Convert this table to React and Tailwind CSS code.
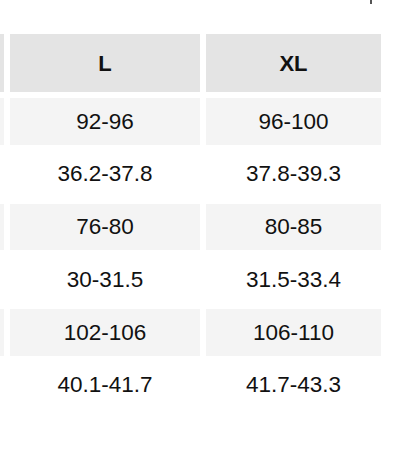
const rows = [
  ['92-96', '96-100'],
  ['36.2-37.8', '37.8-39.3'],
  ['76-80', '80-85'],
  ['30-31.5', '31.5-33.4'],
  ['102-106', '106-110'],
  ['40.1-41.7', '41.7-43.3'],
];

export default function App() {
  return (
    <div className="relative w-[404px] h-[458px] bg-white overflow-hidden font-['Liberation_Sans',Arial,sans-serif] text-[#111]">
      {/* scroll indicator tick */}
      <div className="absolute left-[370px] top-0 w-[2px] h-[4px] bg-[#555]" />

      <div className="pt-[34px]">
        <div className="-ml-[116px] flex flex-col gap-[6px]">
          <div className="grid grid-cols-[120px_190px_175px] gap-[6px] h-[58px] text-[22px] font-bold">
            <div className="bg-[#e4e4e4]" />
            <div className="bg-[#e4e4e4] flex items-center justify-center">L</div>
            <div className="bg-[#e4e4e4] flex items-center justify-center">XL</div>
          </div>
          {rows.map((r, i) => {
            const bg = i % 2 === 0 ? 'bg-[#f4f4f4]' : 'bg-white';
            return (
              <div key={i} className="grid grid-cols-[120px_190px_175px] gap-[6px] h-[46.75px] text-[22.5px]">
                <div className={bg} />
                {r.map((v, j) => (
                  <div key={j} className={`flex items-center justify-center ${bg}`}>
                    {v}
                  </div>
                ))}
              </div>
            );
          })}
        </div>
      </div>
    </div>
  );
}
